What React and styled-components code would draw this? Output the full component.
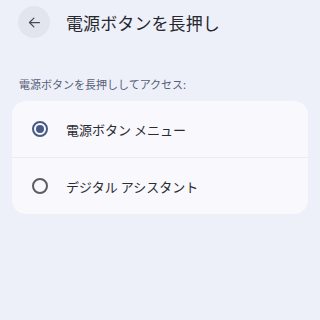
import React from "react";
import styled, { createGlobalStyle } from "styled-components";

const Global = createGlobalStyle`
  html, body { margin: 0; padding: 0; }
  body {
    background: #eef0f9;
    font-family: Roboto, "Noto Sans CJK JP", sans-serif;
    width: 320px;
    height: 320px;
    overflow: hidden;
  }
`;

const Page = styled.div`
  display: flex;
  flex-direction: column;
  width: 320px;
  height: 320px;
  background: #eef0f9;
`;

const TopBar = styled.div`
  display: flex;
  align-items: center;
  height: 44px;
  padding-left: 18px;
  gap: 16px;
`;

const BackButton = styled.div`
  width: 32px;
  height: 32px;
  border-radius: 50%;
  background: #e2e4ee;
  display: flex;
  align-items: center;
  justify-content: center;
`;

const Title = styled.div`
  font-family: "Noto Sans CJK JP", sans-serif;
  font-size: 17px;
  color: #26282e;
  letter-spacing: 0.1px;
`;

const Subtitle = styled.div`
  font-family: "Noto Sans CJK JP", sans-serif;
  font-size: 11px;
  color: #566076;
  margin: 32px 0 0 19px;
  line-height: 16px;
`;

const Card = styled.div`
  margin: 9px 12px 0 12px;
  background: #f8f8fd;
  border-radius: 14px;
  display: flex;
  flex-direction: column;
  overflow: hidden;
`;

const Row = styled.div`
  display: flex;
  align-items: center;
  height: ${(p) => p.$h}px;
  padding-left: 20px;
  gap: 18px;
  border-top: ${(p) => (p.$divider ? "1px solid #ebebf3" : "none")};
`;

const Radio = styled.div`
  width: 16px;
  height: 16px;
  box-sizing: border-box;
  border-radius: 50%;
  border: 2px solid ${(p) => (p.$checked ? "#475a84" : "#5b5d63")};
  display: flex;
  align-items: center;
  justify-content: center;
  &::after {
    content: "";
    display: ${(p) => (p.$checked ? "block" : "none")};
    width: 8px;
    height: 8px;
    border-radius: 50%;
    background: #475a84;
  }
`;

const Label = styled.div`
  font-family: "Noto Sans CJK JP", sans-serif;
  font-size: 13px;
  color: #2a2c31;
`;

export default function App() {
  return (
    <>
      <Global />
      <Page>
        <TopBar>
          <BackButton>
            <svg width="15" height="15" viewBox="0 0 24 24" fill="none" stroke="#4a4c52" strokeWidth="2" strokeLinecap="round" strokeLinejoin="round">
              <path d="M20 12H4" />
              <path d="M11 5l-7 7 7 7" />
            </svg>
          </BackButton>
          <Title>電源ボタンを長押し</Title>
        </TopBar>
        <Subtitle>電源ボタンを長押ししてアクセス:</Subtitle>
        <Card>
          <Row $h={56}>
            <Radio $checked />
            <Label>電源ボタン メニュー</Label>
          </Row>
          <Row $h={56} $divider>
            <Radio />
            <Label>デジタル アシスタント</Label>
          </Row>
        </Card>
      </Page>
    </>
  );
}
